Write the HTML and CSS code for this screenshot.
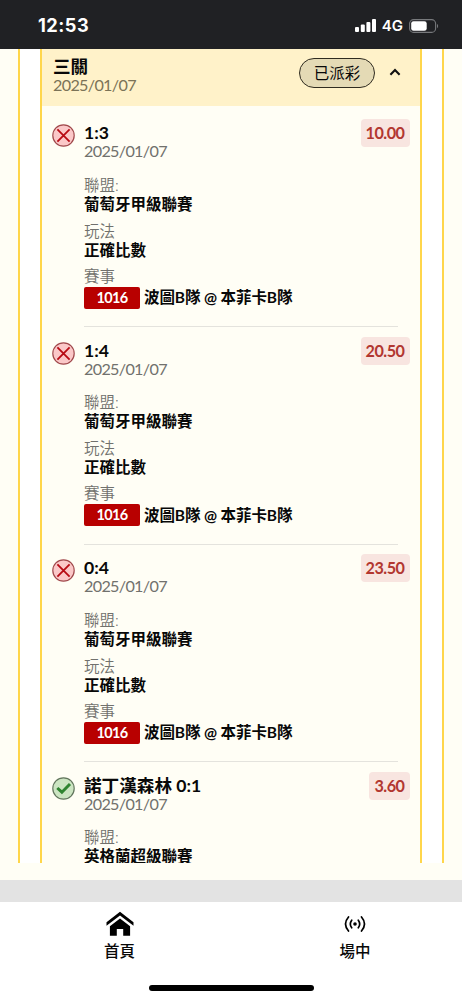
FILE: index.html
```html
<!DOCTYPE html>
<html lang="zh-Hant">
<head>
<meta charset="utf-8">
<meta name="viewport" content="width=device-width">
<title>注單</title>
<link rel="stylesheet" href="styles.css">
</head>
<body>
<div class="screen">
  <header class="status">
    <span class="clock">12:53</span>
    <span class="indicators">
      <svg class="signal" width="22" height="14" viewBox="0 0 22 14" fill="#fff"><rect x="0" y="9" width="4" height="5" rx="1"/><rect x="5.8" y="6.500" width="4" height="7.500" rx="1"/><rect x="11.400" y="4" width="4" height="10" rx="1"/><rect x="17" y="1" width="4" height="13" rx="1"/></svg>
      <span class="network">4G</span>
      <svg class="battery" width="30" height="14" viewBox="0 0 30 14"><rect x=".6" y=".6" width="26" height="12.800" rx="4" fill="none" stroke="#77797c" stroke-width="1.100"/><rect x="2.200" y="2.200" width="15.500" height="9.600" rx="2.300" fill="#fff"/><path d="M28 5v4.200c1.500-.7 1.500-3.500 0-4.200z" fill="#77797c"/></svg>
    </span>
  </header>
  <main class="content">
    <div class="outer">
      <section class="card">
        <div class="card-head">
          <div class="parlay">
            <div class="parlay-name">三關</div>
            <div class="date">2025/01/07</div>
          </div>
          <span class="paid">已派彩</span>
          <svg class="chevron" width="12" height="8" viewBox="0 0 12 8"><path d="M1.400 6.700 6 2l4.600 4.700" fill="none" stroke="#111" stroke-width="2.100"/></svg>
        </div>

        <article class="bet">
          <svg class="result" width="24" height="24" viewBox="0 0 24 24"><circle cx="11.500" cy="12.500" r="10.700" fill="#fbc8c8" stroke="#a14a4d" stroke-width="1.200"/><path d="M5.400 6.400 17.600 18.600M17.600 6.400 5.400 18.600" stroke="#b80b14" stroke-width="1.800"/></svg>
          <div class="detail">
            <div class="pick">1:3</div><div class="date">2025/01/07</div>
            <div class="label first">聯盟:</div><div class="value">葡萄牙甲級聯賽</div>
            <div class="label">玩法</div><div class="value">正確比數</div>
            <div class="label last">賽事</div>
            <div class="match"><span class="code">1016</span><span class="value">波圖B隊 @ 本菲卡B隊</span></div>
          </div>
          <span class="odds">10.00</span>
        </article>

        <article class="bet">
          <svg class="result" width="24" height="24" viewBox="0 0 24 24"><circle cx="11.500" cy="12.500" r="10.700" fill="#fbc8c8" stroke="#a14a4d" stroke-width="1.200"/><path d="M5.400 6.400 17.600 18.600M17.600 6.400 5.400 18.600" stroke="#b80b14" stroke-width="1.800"/></svg>
          <div class="detail">
            <div class="pick">1:4</div><div class="date">2025/01/07</div>
            <div class="label first">聯盟:</div><div class="value">葡萄牙甲級聯賽</div>
            <div class="label">玩法</div><div class="value">正確比數</div>
            <div class="label last">賽事</div>
            <div class="match"><span class="code">1016</span><span class="value">波圖B隊 @ 本菲卡B隊</span></div>
          </div>
          <span class="odds">20.50</span>
        </article>

        <article class="bet">
          <svg class="result" width="24" height="24" viewBox="0 0 24 24"><circle cx="11.500" cy="12.500" r="10.700" fill="#fbc8c8" stroke="#a14a4d" stroke-width="1.200"/><path d="M5.400 6.400 17.600 18.600M17.600 6.400 5.400 18.600" stroke="#b80b14" stroke-width="1.800"/></svg>
          <div class="detail">
            <div class="pick">0:4</div><div class="date">2025/01/07</div>
            <div class="label first">聯盟:</div><div class="value">葡萄牙甲級聯賽</div>
            <div class="label">玩法</div><div class="value">正確比數</div>
            <div class="label last">賽事</div>
            <div class="match"><span class="code">1016</span><span class="value">波圖B隊 @ 本菲卡B隊</span></div>
          </div>
          <span class="odds">23.50</span>
        </article>

        <article class="bet">
          <svg class="result" width="24" height="24" viewBox="0 0 24 24"><circle cx="11.500" cy="12.500" r="10.700" fill="#cce5c2" stroke="#63775e" stroke-width="1.200"/><path d="M5.300 12 9.900 16.200 18 8" fill="none" stroke="#2f8430" stroke-width="3"/></svg>
          <div class="detail">
            <div class="pick">諾丁漢森林 0:1</div><div class="date">2025/01/07</div>
            <div class="label first">聯盟:</div><div class="value">英格蘭超級聯賽</div>
          </div>
          <span class="odds">3.60</span>
        </article>
      </section>
    </div>
  </main>
  <div class="spacer"></div>
  <div class="band"></div>
  <nav class="tabs">
    <div class="tab home">
      <svg width="28" height="26" viewBox="0 0 28 26"><path d="M14 .8.5 11.200v3.600L14 4.400l13.500 10.400v-3.600z"/><path d="M14 7.400 3.900 15.200V24.800H10.800v-6.800h6.400v6.800h6.900V15.200z"/></svg>
      <span>首頁</span>
    </div>
    <div class="tab live">
      <svg width="22" height="26" viewBox="0 0 22 26" fill="none" stroke="#000" stroke-width="1.700" stroke-linecap="round"><circle cx="11" cy="13" r="1.800" fill="#000" stroke="none"/><path d="M7.700 9.200Q4.900 13 7.700 16.800M14.300 9.200q2.800 3.800 0 7.600M4.500 6Q-1.500 13 4.500 20M17.500 6q6 7 0 14"/></svg>
      <span>場中</span>
    </div>
  </nav>
  <footer class="system"><div class="home-bar"></div></footer>
</div>
</body>
</html>
```
FILE: styles.css
```css
* { box-sizing: border-box; }
body { margin: 0; font-family: Lato, "Noto Sans CJK TC", sans-serif; color: #080808; }
.screen { width: 462px; height: 1000px; display: flex; flex-direction: column; overflow: hidden; background: #fff; }
.status { height: 49px; flex: none; background: #202124; color: #fff; display: flex; justify-content: space-between; padding: 15px 23px 0 38px; font-family: Inter, sans-serif; }
.clock { font-size: 18.2px; letter-spacing: .5px; line-height: 21px; font-weight: 700; }
.indicators { display: flex; align-items: center; height: 21px; }
.signal { margin-right: 5px; margin-top: -1px; }
.network { font-size: 15px; font-weight: 600; line-height: 21px; margin-right: 6px; }
.content { height: 814px; flex: none; overflow: hidden; background: #fffef5; padding: 0 18px; }
.outer { height: 100%; background: #fff; border: solid #ffd64b; border-width: 0 2px; padding: 0 20px; }
.card { height: 100%; background: #fffef5; border: solid #ffd64b; border-width: 0 2px; }
.card-head { height: 56.5px; background: #fff2c9; display: flex; padding: 8px 19px 0 11px; }
.parlay { flex: 1; }
.parlay-name { font-size: 17.6px; line-height: 20px; font-weight: 700; }
.date { font-size: 16.2px; line-height: 16px; height: 18px; letter-spacing: -.69px; color: #71716d; white-space: nowrap; }
.card-head .date { color: #7b7357; }
.paid { width: 76px; height: 30px; border: 1px solid #302c20; border-radius: 15px; background: #e4dab5; font-size: 15.5px; line-height: 29px; text-align: center; margin: 1px 14px 0 0; }
.chevron { margin-top: 11px; }
.bet { height: 217.5px; display: flex; align-items: flex-start; padding: 17.5px 10.5px 0 10px; }
.result { flex: none; margin: 0 8px 0 0; }
.detail { width: 314px; height: 204px; flex: none; margin-right: -50px; border-bottom: 1px solid #e4e3dd; white-space: nowrap; }
.bet:last-child .detail { border: 0; }
.pick { font-size: 17.6px; line-height: 20px; height: 20px; font-weight: 700; }
.label { height: 19px; line-height: 19px; font-size: 15.5px; font-weight: 350; color: #71716d; margin-top: 8px; }
.label.first { margin-top: 14.5px; }
.label.last { margin-top: 7px; }
.value { height: 19px; line-height: 19px; font-size: 15.5px; font-weight: 700; }
.match { display: flex; align-items: center; height: 22px; margin-top: 1px; gap: 4px; }
.match .value { letter-spacing: -.1px; line-height: 19px; }
.code { width: 56px; height: 22px; background: #b80000; border-radius: 2px; color: #fff; font-size: 14.5px; letter-spacing: -.7px; line-height: 21px; font-weight: 700; text-align: center; }
.odds { height: 28px; padding: 0 5px; border-radius: 4px; background: #f8e5e0; color: #b23730; font-size: 16.2px; letter-spacing: -.5px; font-weight: 700; line-height: 28px; margin: -4px 0 0 auto; position: relative; }
.spacer { height: 17px; flex: none; background: #fffef5; }
.band { height: 22px; flex: none; background: #e3e3e3; }
.tabs { display: flex; height: 70px; flex: none; }
.tab { display: flex; flex-direction: column; align-items: center; font-size: 15.5px; font-weight: 500; line-height: 22px; padding-top: 9px; gap: 3px; }
.home { width: 239px; }
.live { width: 223px; padding-left: 9px; }
.system { display: flex; justify-content: center; padding-top: 13px; }
.home-bar { width: 165px; height: 6px; border-radius: 3px; background: #000; }
```
